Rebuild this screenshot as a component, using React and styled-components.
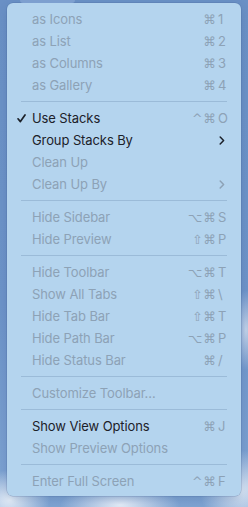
import React from "react";
import styled, { createGlobalStyle } from "styled-components";

const Global = createGlobalStyle`
  html, body { margin: 0; padding: 0; }
  body {
    width: 248px;
    height: 507px;
    overflow: hidden;
    font-family: Inter, "Liberation Sans", "DejaVu Sans", sans-serif;
    background:
      radial-gradient(ellipse 40px 30px at 10px 500px, rgba(235,242,250,0.95), rgba(235,242,250,0) 100%),
      radial-gradient(ellipse 60px 20px at 120px 505px, rgba(240,245,252,0.9), rgba(240,245,252,0) 100%),
      radial-gradient(ellipse 40px 40px at 240px 490px, rgba(230,238,248,0.9), rgba(230,238,248,0) 100%),
      radial-gradient(ellipse 12px 40px at 246px 330px, rgba(215,225,240,0.8), rgba(215,225,240,0) 100%),
      linear-gradient(180deg, #6a90c5 0%, #6d93c8 60%, #7ea3d2 100%);
  }
`;

const Page = styled.div`
  padding: 3px 7px 0 7px;
  position: relative;
`;

const TabGhost = styled.div`
  position: absolute;
  top: 0;
  left: 20px;
  width: 55px;
  height: 3px;
  background: #7d9fcf;
  border-radius: 0 0 3px 3px;
`;

const Menu = styled.div`
  width: 234px;
  height: 493px;
  box-sizing: border-box;
  padding: 5px 0 4px;
  background: #b4d4ee;
  border-radius: 6px;
  box-shadow: 0 0 0 0.5px rgba(60, 90, 140, 0.35), 0 4px 10px rgba(40, 70, 120, 0.18);
  display: flex;
  flex-direction: column;
`;

const Row = styled.div`
  height: 22px;
  display: flex;
  align-items: center;
  padding: 0 15px 0 10px;
  font-size: 13px;
  color: ${(p) => (p.$enabled ? "#1c2129" : "#8da2b6")};
  letter-spacing: -0.1px;
`;

const Check = styled.span`
  width: 15px;
  display: flex;
  align-items: center;
`;

const Label = styled.span`
  flex: 1;
  white-space: nowrap;
`;

const Shortcut = styled.span`
  display: flex;
  align-items: center;
  color: #8da2b6;
  font-size: 13px;
`;

const Mods = styled.span`
  font-family: "DejaVu Sans", sans-serif;
  font-size: 12.5px;
  letter-spacing: 1px;
`;

const Key = styled.span`
  width: 8px;
  margin-left: 1px;
  text-align: left;
`;

const Chevron = styled.span`
  display: flex;
  align-items: center;
  padding-right: 1px;
  color: ${(p) => (p.$enabled ? "#1c2129" : "#8da2b6")};
`;

const Separator = styled.div`
  height: 11px;
  display: flex;
  align-items: center;
  padding: 0 14px;
  &::after {
    content: "";
    flex: 1;
    height: 1px;
    background: #9bbbd8;
  }
`;

const items = [
  { label: "as Icons", mods: "⌘", key: "1" },
  { label: "as List", mods: "⌘", key: "2" },
  { label: "as Columns", mods: "⌘", key: "3" },
  { label: "as Gallery", mods: "⌘", key: "4" },
  "sep",
  { label: "Use Stacks", mods: "^⌘", key: "O", enabled: true, checked: true },
  { label: "Group Stacks By", enabled: true, sub: true },
  { label: "Clean Up" },
  { label: "Clean Up By", sub: true },
  "sep",
  { label: "Hide Sidebar", mods: "⌥⌘", key: "S" },
  { label: "Hide Preview", mods: "⇧⌘", key: "P" },
  "sep",
  { label: "Hide Toolbar", mods: "⌥⌘", key: "T" },
  { label: "Show All Tabs", mods: "⇧⌘", key: "\\" },
  { label: "Hide Tab Bar", mods: "⇧⌘", key: "T" },
  { label: "Hide Path Bar", mods: "⌥⌘", key: "P" },
  { label: "Hide Status Bar", mods: "⌘", key: "/" },
  "sep",
  { label: "Customize Toolbar…" },
  "sep",
  { label: "Show View Options", mods: "⌘", key: "J", enabled: true },
  { label: "Show Preview Options" },
  "sep",
  { label: "Enter Full Screen", mods: "^⌘", key: "F" },
];

const CheckIcon = () => (
  <svg width="9" height="9" viewBox="0 0 9 9">
    <path d="M1 4.8 L3.4 7.6 L8 1" fill="none" stroke="#1c2129" strokeWidth="1.7" strokeLinecap="round" strokeLinejoin="round" />
  </svg>
);

const ChevronIcon = () => (
  <svg width="6" height="9" viewBox="0 0 6 9">
    <path d="M1.2 1 L4.6 4.5 L1.2 8" fill="none" stroke="currentColor" strokeWidth="1.5" strokeLinecap="round" strokeLinejoin="round" />
  </svg>
);

export default function App() {
  return (
    <>
      <Global />
      <Page>
        <TabGhost />
        <Menu>
          {items.map((it, i) =>
            it === "sep" ? (
              <Separator key={i} />
            ) : (
              <Row key={i} $enabled={it.enabled}>
                <Check>{it.checked && <CheckIcon />}</Check>
                <Label>{it.label}</Label>
                {it.mods && (
                  <Shortcut>
                    <Mods>{it.mods}</Mods>
                    <Key>{it.key}</Key>
                  </Shortcut>
                )}
                {it.sub && (
                  <Chevron $enabled={it.enabled}>
                    <ChevronIcon />
                  </Chevron>
                )}
              </Row>
            )
          )}
        </Menu>
      </Page>
    </>
  );
}
